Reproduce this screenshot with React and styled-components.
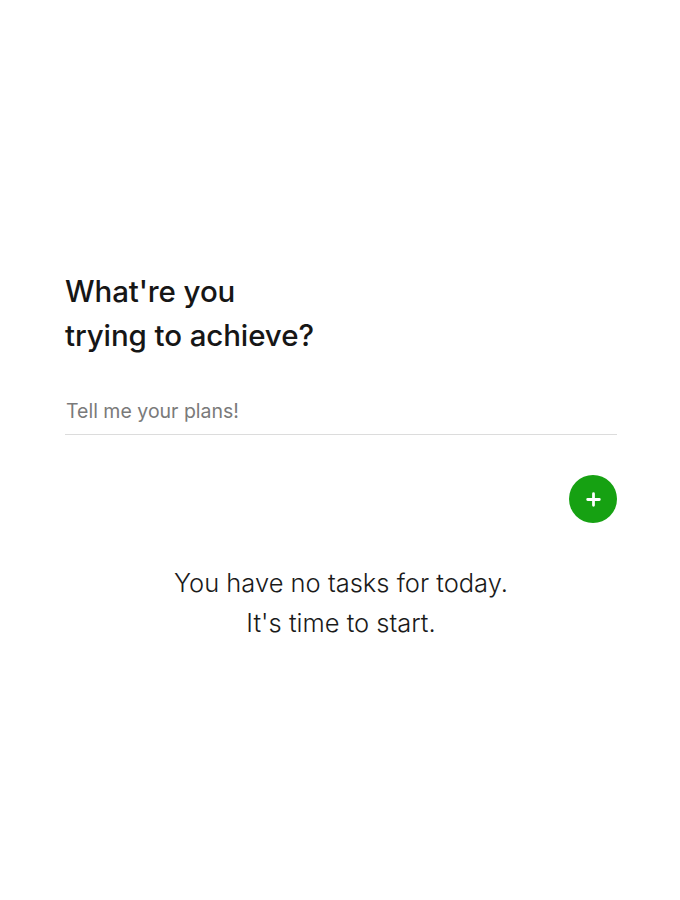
import React from 'react'
import styled, { createGlobalStyle } from 'styled-components'

const GlobalStyle = createGlobalStyle`
  * { box-sizing: border-box; }
  body {
    margin: 0;
    background: #ffffff;
    font-family: Inter, "Noto Sans", sans-serif;
    color: #1a1a1a;
  }
`

export default function App() {
  return (
    <>
      <GlobalStyle />
      <Page>
        <Title>
          What're you
          <br />
          trying to achieve?
        </Title>
        <PlanInput placeholder="Tell me your plans!" />
        <ActionRow>
          <AddBtn aria-label="Add task">
            <svg width="17" height="17" viewBox="0 0 16 16">
              <path d="M8 2.5v11M2.5 8h11" stroke="#fff" strokeWidth="2.6" strokeLinecap="round" />
            </svg>
          </AddBtn>
        </ActionRow>
        <Empty>
          You have no tasks for today.
          <br />
          It's time to start.
        </Empty>
      </Page>
    </>
  )
}

const Page = styled.div`
  display: flex;
  flex-direction: column;
  padding: 269px 63px 0 65px;
  min-height: 100vh;
`

const Title = styled.h1`
  margin: 0;
  font-size: 29.5px;
  font-weight: 500;
  line-height: 44px;
  letter-spacing: -0.1px;
  color: #161616;
`

const PlanInput = styled.input`
  margin-top: 41px;
  width: 100%;
  border: none;
  border-bottom: 1px solid #dcdcdc;
  padding: 0 0 10px 1px;
  font-family: Inter, "Noto Sans", sans-serif;
  font-size: 19.5px;
  line-height: 26px;
  height: 37px;
  outline: none;
  background: transparent;

  &::placeholder {
    color: #7a7a7a;
  }
`

const ActionRow = styled.div`
  display: flex;
  justify-content: flex-end;
  margin-top: 40px;
`

const AddBtn = styled.button`
  width: 48px;
  height: 48px;
  border-radius: 50%;
  border: none;
  background-color: #16a112;
  display: flex;
  align-items: center;
  justify-content: center;
  padding: 0;
  cursor: pointer;
`

const Empty = styled.p`
  margin: 40px 0 0;
  text-align: center;
  font-size: 25.5px;
  font-weight: 300;
  line-height: 40px;
  color: #1a1a1a;
`
